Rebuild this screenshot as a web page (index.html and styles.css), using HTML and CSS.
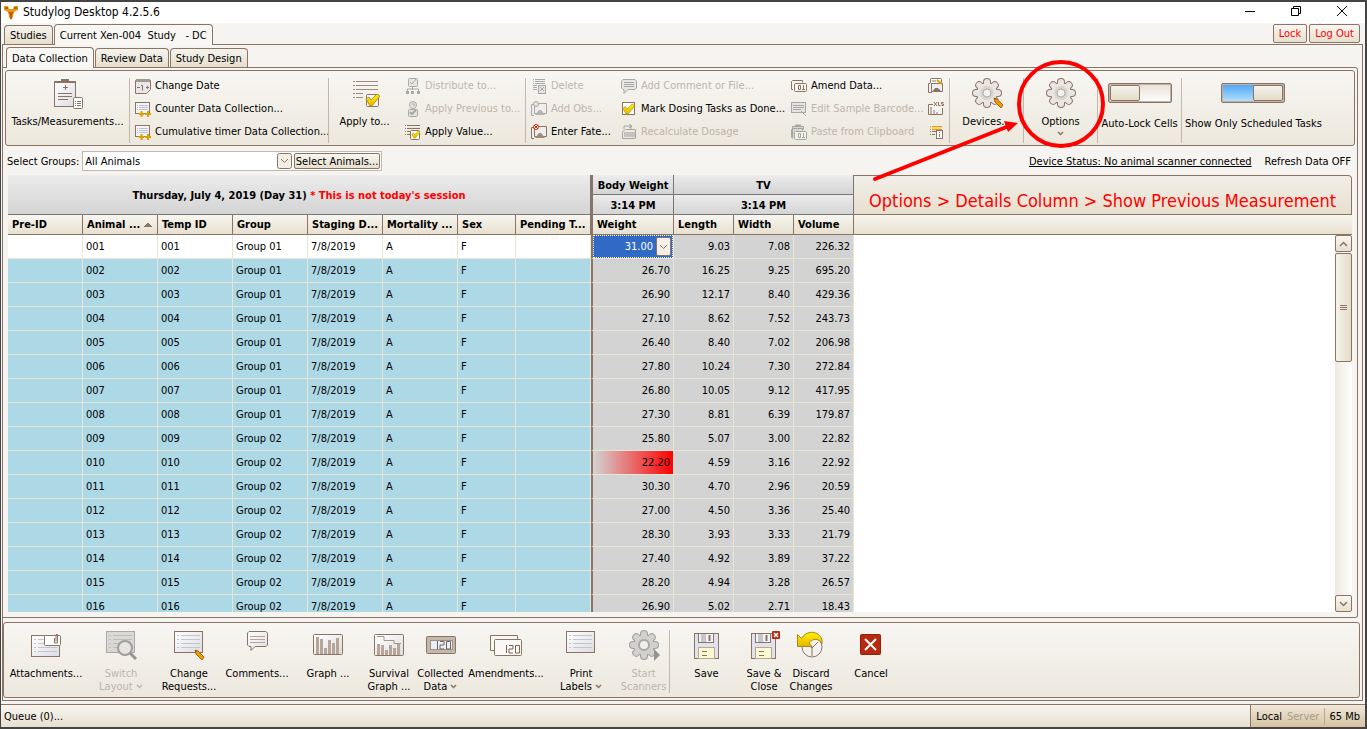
FILE: index.html
```html
<!DOCTYPE html>
<html lang="en">
<head>
    <meta charset="UTF-8">
    <meta name="viewport" content="width=device-width, initial-scale=1.0">
    <title>Studylog Desktop 4.2.5.6</title>
    <link rel="stylesheet" href="styles.css">
</head>
<body>
    <!-- Shared icon shapes -->
    <svg class="sprite" aria-hidden="true">
        <defs>
            <linearGradient id="paper" x1="0" y1="0" x2="1" y2="1">
                <stop offset="0" stop-color="#ffffff"/>
                <stop offset="1" stop-color="#dcdde2"/>
            </linearGradient>
            <linearGradient id="gold" x1="0" y1="0" x2="0" y2="1">
                <stop offset="0" stop-color="#fff200"/>
                <stop offset="1" stop-color="#e8b400"/>
            </linearGradient>
            <g id="gear-shape">
                <rect x="13" y="1" width="6" height="28" rx="3"/>
                <rect x="13" y="1" width="6" height="28" rx="3" transform="rotate(45 16 15)"/>
                <rect x="13" y="1" width="6" height="28" rx="3" transform="rotate(90 16 15)"/>
                <rect x="13" y="1" width="6" height="28" rx="3" transform="rotate(135 16 15)"/>
                <circle cx="16" cy="15" r="10"/>
            </g>
            <g id="gear">
                <use href="#gear-shape" fill="#8c7464" stroke="#8c7464" stroke-width="2"/>
                <use href="#gear-shape" fill="#e9e6e2"/>
                <circle cx="16" cy="15" r="7" fill="#d8d4d0"/>
                <circle cx="16" cy="15" r="4" fill="#f4f2ee" stroke="#b5a89e"/>
            </g>
            <g id="pencil">
                <path d="M0 0l3 1 6 6-2 3-6-6z" fill="#f09a00" stroke="#a86a10"/>
                <path d="M0 0l2 1-1 1z" fill="#5c4030"/>
            </g>
            <g id="check">
                <path d="M1 5l3-2 2 3 6-6 3 2-8 10h-2z" fill="url(#gold)" stroke="#a98a10" stroke-width="0.8"/>
            </g>
            <g id="sheet">
                <rect x="1.5" y="1.5" width="28" height="21" fill="url(#paper)" stroke="#8c7464"/>
                <path d="M4 5.500h2M4 9.500h2M4 13.500h2M4 17.500h2M8 5.500h19M8 9.500h19M8 13.500h19M8 17.500h19" stroke="#c4c4cc"/>
            </g>
            <g id="floppy">
                <rect x="3.500" y="3.500" width="24" height="25" fill="#e0e2f0" stroke="#8c7464"/>
                <rect x="7.500" y="3.500" width="15" height="9" fill="#f4f4f4" stroke="#8c7464"/>
                <rect x="10" y="4" width="5" height="8" fill="#c4c6cc"/>
                <path d="M18.500 5v6" stroke="#8c7464" stroke-width="2"/>
                <rect x="7.500" y="17.500" width="16" height="11" fill="#fbf8d4" stroke="#b8a890"/>
                <path d="M11 21.500h5M11 25.500h5" stroke="#8c7464"/>
            </g>
            <g id="counter">
                <rect x="0.500" y="1.500" width="14" height="11" fill="#f4f5fa" stroke="#8c7464"/>
                <path d="M2 4.500h1M4 4.500h9M2 6.500h1M4 6.500h9M2 8.500h1M4 8.500h9" stroke="#bcc0cc"/>
                <path d="M4 13h5M6.500 10v6M10 13h6M13 10v6" stroke="#dfa000" stroke-width="2"/>
            </g>
            <g id="picture">
                <path d="M3 3.500h-2.500v11H3M5 2.500h10.500v10h-12v-9" fill="#eeeeee" stroke="#8c7464"/>
                <path d="M4 14l4-5 2 0 4 5z" fill="#a08a7c"/>
            </g>
            <g id="tag">
                <path d="M2 11.500h-1.500v-8l1-1h10v2" fill="none" stroke="#8c7464"/>
                <rect x="3.500" y="5.500" width="12" height="8" rx="1" fill="#f7f6f4" stroke="#8c7464"/>
                <path d="M7.500 7.500h2v4h-2zM12.500 7v5M11 11.500h3" fill="none" stroke="#8c7464"/>
            </g>
            <g id="digits">
                <path d="M0.500 0v8M3 0.500h4v3.500h-4v4h4M9.500 0.500h4v7.500h-4z" fill="none" stroke="#7c6454"/>
            </g>
        </defs>
    </svg>

    <div class="window">
        <header class="titlebar">
            <svg width="16" height="16" viewBox="0 0 16 16" aria-hidden="true">
                <path d="M1 1h4l1 3h4l1-3h4v4l-4 2-1 5-2 3-2-3-1-5-4-2z" fill="#e89a10"/>
                <path d="M2 3h3M11 3h3M6 7l2 2 2-2M8 9v5" fill="none" stroke="#b04808" stroke-width="1.500"/>
            </svg>
            <h1 class="title">Studylog Desktop 4.2.5.6</h1>
            <div class="window-buttons">
                <button aria-label="Minimize"><svg width="12" height="12"><path d="M1 6.500h10" stroke="#000"/></svg></button>
                <button aria-label="Restore"><svg width="12" height="12"><path d="M1.500 3.500h7v7h-7zM3.500 3v-1.500h7v7h-2" fill="none" stroke="#000"/></svg></button>
                <button aria-label="Close"><svg width="12" height="12"><path d="M1 1l10 10M11 1l-10 10" stroke="#000"/></svg></button>
            </div>
        </header>

        <nav class="tabs tabs-main">
            <button class="tab">Studies</button>
            <button class="tab active">Current Xen-004  Study   - DC</button>
            <div class="session">
                <button class="btn">Lock</button>
                <button class="btn">Log Out</button>
            </div>
        </nav>

        <main class="workspace">
            <nav class="tabs tabs-study">
                <button class="tab active">Data Collection</button>
                <button class="tab">Review Data</button>
                <button class="tab">Study Design</button>
            </nav>

            <section class="page">
                <div class="ribbon ribbon-top">
                    <div class="group">
                        <button class="big">
                            <svg width="32" height="32" viewBox="0 0 32 32"><rect x="3.500" y="3.500" width="21" height="25" fill="url(#paper)" stroke="#8c7464"/><path d="M3 3h22v2H3zM10 1h8v3h-8z" fill="#8c7464"/><path d="M14.500 7v5M12 9.500h5M7 15.500h14M7 18.500h14M7 21.500h10" stroke="#8c7464"/><rect x="22.500" y="19.500" width="9" height="11" rx="1" fill="#fff" stroke="#8c7464"/><path d="M24 23.500h1M26 23.500h4M24 25.500h1M26 25.500h4M24 27.500h1M26 27.500h4" stroke="#8c7464"/></svg>
                            <span>Tasks/Measurements...</span>
                        </button>
                    </div>
                    <div class="group list divided">
                        <button class="small"><svg width="16" height="16"><path d="M0.500 2.500h15v9l-4 4h-11z" fill="#e8e8ea" stroke="#8c7464"/><path d="M1 1h14v3H1z" fill="#a89888"/><path d="M2 9.500h3M6 7.500h1.500v5M11 9.500h3M12.500 8v3" fill="none" stroke="#8c7464"/></svg>Change Date</button>
                        <button class="small"><svg width="16" height="16"><use href="#counter"/></svg>Counter Data Collection...</button>
                        <button class="small"><svg width="16" height="16"><use href="#counter"/></svg>Cumulative timer Data Collection...</button>
                    </div>
                    <div class="group divided">
                        <button class="big">
                            <svg width="32" height="32" viewBox="0 0 32 32"><path d="M4 3.500h2M7 3.500h22M4 7.500h2M7 7.500h22M4 11.500h2M7 11.500h22M4 15.500h2M7 15.500h7M4 19.500h2M7 19.500h7" stroke="#a08c7e"/><rect x="17.500" y="16.500" width="12" height="12" rx="1" fill="#f4f4f8" stroke="#8c7464"/><use href="#check" x="16" y="16"/></svg>
                            <span>Apply to...</span>
                        </button>
                    </div>
                    <div class="group list">
                        <button class="small" disabled><svg width="16" height="16"><rect x="3.500" y="0.500" width="9" height="8" rx="1" fill="#ddd" stroke="#8c7464"/><path d="M5 4l2 2 4-5M7.500 9v3M2.500 13v-2h11v2" fill="none" stroke="#8c7464"/><path d="M1 13h3v3H1zM6 13h3v3H6zM12 13h3v3h-3z" fill="#8c7464"/></svg>Distribute to...</button>
                        <button class="small" disabled><svg width="16" height="16"><circle cx="8" cy="4" r="3.500" fill="#ddd" stroke="#8c7464"/><path d="M8 2v2h2" fill="none" stroke="#8c7464"/><rect x="3.500" y="8.500" width="9" height="7" rx="1" fill="#ddd" stroke="#8c7464"/><path d="M5 11l2 2 4-4" fill="none" stroke="#8c7464" stroke-width="2"/></svg>Apply Previous to...</button>
                        <button class="small"><svg width="16" height="16"><path d="M0 1.500h1M2 1.500h13M0 4.500h1M2 4.500h13M0 7.500h1M2 7.500h4M0 10.500h1M2 10.500h3" stroke="#8c7464"/><rect x="5.500" y="6.500" width="9" height="9" rx="1" fill="#fff" stroke="#8c7464"/><use href="#check" transform="translate(6 7) scale(0.600)"/></svg>Apply Value...</button>
                    </div>
                    <div class="group list divided">
                        <button class="small" disabled><svg width="16" height="16"><path d="M2 1.500h1M4 1.500h10M2 3.500h1M4 3.500h10M2 5.500h1M4 5.500h10M2 7.500h4M2 9.500h4M2 11.500h4" stroke="#8c7464"/><rect x="7.500" y="7.500" width="7" height="8" fill="#ddd" stroke="#8c7464"/><path d="M9 9l4 4M13 9l-4 4" stroke="#8c7464"/></svg>Delete</button>
                        <button class="small" disabled><svg width="16" height="16"><use href="#picture"/><circle cx="5" cy="3" r="2.500" fill="#ddd" stroke="#8c7464"/></svg>Add Obs...</button>
                        <button class="small"><svg width="16" height="16"><use href="#picture"/><circle cx="5" cy="3" r="2.500" fill="#fff" stroke="#c03010"/><path d="M3 1l4 4M7 1L3 5" stroke="#c03010"/></svg>Enter Fate...</button>
                    </div>
                    <div class="group list">
                        <button class="small" disabled><svg width="16" height="16"><path d="M2 1.500h12l1.500 1.500v7l-1.500 1.500H7l-4 4v-4H2L0.500 10V3z" fill="#ddd" stroke="#8c7464"/><path d="M3 4.500h10M3 6.500h10M3 8.500h10" stroke="#8c7464"/></svg>Add Comment or File...</button>
                        <button class="small"><svg width="16" height="16"><rect x="1.500" y="1.500" width="12" height="12" fill="#fff" stroke="#8c7464"/><use href="#check" transform="translate(1 3) scale(0.850)"/></svg>Mark Dosing Tasks as Done...</button>
                        <button class="small" disabled><svg width="16" height="16"><path d="M1.500 14.500v-7l3-2h10v9zM3 5V2h7v3M8 0l3 2-3 2" fill="none" stroke="#8c7464"/><path d="M3 8h11v5H3z" fill="#aaa"/></svg>Recalculate Dosage</button>
                    </div>
                    <div class="group list">
                        <button class="small"><svg width="16" height="16"><use href="#tag"/></svg>Amend Data...</button>
                        <button class="small" disabled><svg width="16" height="16"><rect x="0.500" y="1.500" width="14" height="10" fill="#ddd" stroke="#8c7464"/><path d="M2 4.500h11M2 6.500h11M2 8.500h8M10 10l5 5" stroke="#8c7464"/></svg>Edit Sample Barcode...</button>
                        <button class="small" disabled><svg width="16" height="16"><path d="M1.500 14.500v-12h11v3" fill="#ccc" stroke="#8c7464"/><path d="M4 1.500h6" stroke="#8c7464" stroke-width="2"/><use href="#tag" y="2"/></svg>Paste from Clipboard</button>
                    </div>
                    <div class="group list">
                        <button class="small" aria-label="Edit picture data"><svg width="16" height="16"><rect x="2.500" y="0.500" width="11" height="5" rx="1" fill="#fff" stroke="#8c7464"/><path d="M5 2v2M7 2v2M9 3h2" stroke="#8c7464"/><path d="M2 5.500H.500v9H4M3.500 5.500h11v8h-11z" fill="#eee" stroke="#8c7464"/><path d="M4 14l3-4h3l4 4z" fill="#8c7464"/><path d="M9 2l5 4" stroke="#e89a00" stroke-width="2"/></svg></button>
                        <button class="small" aria-label="Export to XLS"><svg width="16" height="16"><path d="M5 3.500H.500v10h14V7" fill="#f4f3f0" stroke="#8c7464"/><path d="M2 6h2v7H2zM5 9h2v4H5zM8 11h2v2H8z" fill="#c4b4a8"/><path d="M6 1l3 4M9 1L6 5M10.500 1v3.500h2M15.500 1.500h-2V3h2v1.500h-2" fill="none" stroke="#8c7464"/></svg></button>
                        <button class="small" aria-label="Show details"><svg width="16" height="16"><path d="M2 2.500h1M4 2.500h10M2 5.500h1M4 5.500h10" stroke="#e89a00"/><path d="M2 4h1M4 4h10" stroke="#f4c060"/><path d="M2 7.500h1M4 7.500h4M2 10.500h1M4 10.500h3" stroke="#8c7464"/><rect x="8.500" y="6.500" width="6" height="8" fill="#fff" stroke="#8c7464"/><path d="M11.500 8v1M11.500 10v3" stroke="#8c7464"/></svg></button>
                    </div>
                    <div class="group divided">
                        <button class="big">
                            <svg width="32" height="32" viewBox="0 0 32 32"><use href="#gear"/><use href="#pencil" x="23" y="20"/></svg>
                            <span>Devices...</span>
                        </button>
                    </div>
                    <div class="group divided">
                        <button class="big">
                            <svg width="32" height="32" viewBox="0 0 32 32"><use href="#gear"/></svg>
                            <span>Options</span>
                            <svg class="caret" width="7" height="6"><path d="M1 1l2.500 2.500L6 1" fill="none" stroke="#8c7464" stroke-width="1.500"/></svg>
                        </button>
                    </div>
                    <div class="group divided">
                        <label class="switch"><input type="checkbox"><span>Auto-Lock Cells</span></label>
                    </div>
                    <div class="group divided">
                        <label class="switch"><input type="checkbox" checked><span>Show Only Scheduled Tasks</span></label>
                    </div>
                </div>

                <div class="filters">
                    <label for="groups">Select Groups:</label>
                    <div class="group-picker">
                        <select id="groups"><option>All Animals</option></select>
                        <button class="btn">Select Animals...</button>
                    </div>
                    <a class="device-status" href="#">Device Status: No animal scanner connected</a>
                    <span>Refresh Data OFF</span>
                </div>

                <div class="grid">
                    <table>
                        <colgroup>
                            <col class="c-wide"><col class="c-wide"><col class="c-wide"><col class="c-wide"><col class="c-wide"><col class="c-wide"><col class="c-sex"><col class="c-wide">
                            <col class="c-weight"><col class="c-num"><col class="c-num"><col class="c-num"><col>
                        </colgroup>
                        <thead>
                            <tr class="bands">
                                <th class="band session-band" colspan="8" rowspan="2">Thursday, July 4, 2019 (Day 31) <span class="warn">* This is not today's session</span></th>
                                <th class="band split">Body Weight</th>
                                <th class="band" colspan="3">TV</th>
                                <th class="hint" rowspan="2">Options &gt; Details Column &gt; Show Previous Measurement</th>
                            </tr>
                            <tr class="bands">
                                <th class="band split">3:14 PM</th>
                                <th class="band" colspan="3">3:14 PM</th>
                            </tr>
                            <tr class="columns">
                                <th>Pre-ID</th>
                                <th class="sorted">Animal ...</th>
                                <th>Temp ID</th>
                                <th>Group</th>
                                <th>Staging D...</th>
                                <th>Mortality ...</th>
                                <th>Sex</th>
                                <th>Pending T...</th>
                                <th class="split">Weight</th>
                                <th>Length</th>
                                <th>Width</th>
                                <th>Volume</th>
                                <th class="rest"></th>
                            </tr>
                        </thead>
                        <tbody>
                            <tr class="current"><td></td><td>001</td><td>001</td><td>Group 01</td><td>7/8/2019</td><td>A</td><td>F</td><td></td><td class="num split editing"><div class="editor"><input type="text" value="31.00" aria-label="Weight"><button class="drop" aria-label="Open"><svg width="9" height="6"><path d="M1 1l3.500 3.500L8 1" fill="none" stroke="#8c7464"/></svg></button></div></td><td class="num">9.03</td><td class="num">7.08</td><td class="num">226.32</td><td class="rest"></td></tr>
                            <tr><td></td><td>002</td><td>002</td><td>Group 01</td><td>7/8/2019</td><td>A</td><td>F</td><td></td><td class="num split">26.70</td><td class="num">16.25</td><td class="num">9.25</td><td class="num">695.20</td><td class="rest"></td></tr>
                            <tr><td></td><td>003</td><td>003</td><td>Group 01</td><td>7/8/2019</td><td>A</td><td>F</td><td></td><td class="num split">26.90</td><td class="num">12.17</td><td class="num">8.40</td><td class="num">429.36</td><td class="rest"></td></tr>
                            <tr><td></td><td>004</td><td>004</td><td>Group 01</td><td>7/8/2019</td><td>A</td><td>F</td><td></td><td class="num split">27.10</td><td class="num">8.62</td><td class="num">7.52</td><td class="num">243.73</td><td class="rest"></td></tr>
                            <tr><td></td><td>005</td><td>005</td><td>Group 01</td><td>7/8/2019</td><td>A</td><td>F</td><td></td><td class="num split">26.40</td><td class="num">8.40</td><td class="num">7.02</td><td class="num">206.98</td><td class="rest"></td></tr>
                            <tr><td></td><td>006</td><td>006</td><td>Group 01</td><td>7/8/2019</td><td>A</td><td>F</td><td></td><td class="num split">27.80</td><td class="num">10.24</td><td class="num">7.30</td><td class="num">272.84</td><td class="rest"></td></tr>
                            <tr><td></td><td>007</td><td>007</td><td>Group 01</td><td>7/8/2019</td><td>A</td><td>F</td><td></td><td class="num split">26.80</td><td class="num">10.05</td><td class="num">9.12</td><td class="num">417.95</td><td class="rest"></td></tr>
                            <tr><td></td><td>008</td><td>008</td><td>Group 01</td><td>7/8/2019</td><td>A</td><td>F</td><td></td><td class="num split">27.30</td><td class="num">8.81</td><td class="num">6.39</td><td class="num">179.87</td><td class="rest"></td></tr>
                            <tr><td></td><td>009</td><td>009</td><td>Group 02</td><td>7/8/2019</td><td>A</td><td>F</td><td></td><td class="num split">25.80</td><td class="num">5.07</td><td class="num">3.00</td><td class="num">22.82</td><td class="rest"></td></tr>
                            <tr><td></td><td>010</td><td>010</td><td>Group 02</td><td>7/8/2019</td><td>A</td><td>F</td><td></td><td class="num split alert">22.20</td><td class="num">4.59</td><td class="num">3.16</td><td class="num">22.92</td><td class="rest"></td></tr>
                            <tr><td></td><td>011</td><td>011</td><td>Group 02</td><td>7/8/2019</td><td>A</td><td>F</td><td></td><td class="num split">30.30</td><td class="num">4.70</td><td class="num">2.96</td><td class="num">20.59</td><td class="rest"></td></tr>
                            <tr><td></td><td>012</td><td>012</td><td>Group 02</td><td>7/8/2019</td><td>A</td><td>F</td><td></td><td class="num split">27.00</td><td class="num">4.50</td><td class="num">3.36</td><td class="num">25.40</td><td class="rest"></td></tr>
                            <tr><td></td><td>013</td><td>013</td><td>Group 02</td><td>7/8/2019</td><td>A</td><td>F</td><td></td><td class="num split">28.30</td><td class="num">3.93</td><td class="num">3.33</td><td class="num">21.79</td><td class="rest"></td></tr>
                            <tr><td></td><td>014</td><td>014</td><td>Group 02</td><td>7/8/2019</td><td>A</td><td>F</td><td></td><td class="num split">27.40</td><td class="num">4.92</td><td class="num">3.89</td><td class="num">37.22</td><td class="rest"></td></tr>
                            <tr><td></td><td>015</td><td>015</td><td>Group 02</td><td>7/8/2019</td><td>A</td><td>F</td><td></td><td class="num split">28.20</td><td class="num">4.94</td><td class="num">3.28</td><td class="num">26.57</td><td class="rest"></td></tr>
                            <tr><td></td><td>016</td><td>016</td><td>Group 02</td><td>7/8/2019</td><td>A</td><td>F</td><td></td><td class="num split">26.90</td><td class="num">5.02</td><td class="num">2.71</td><td class="num">18.43</td><td class="rest"></td></tr>
                        </tbody>
                    </table>
                    <div class="scrollbar">
                        <button class="btn" aria-label="Scroll up"><svg width="9" height="6"><path d="M1 5l3.500-3.500L8 5" fill="none" stroke="#8c7464" stroke-width="1.500"/></svg></button>
                        <div class="thumb"><svg width="7" height="6"><path d="M0 .500h7M0 2.500h7M0 4.500h7" stroke="#8c7464"/></svg></div>
                        <button class="btn" aria-label="Scroll down"><svg width="9" height="6"><path d="M1 1l3.500 3.500L8 1" fill="none" stroke="#8c7464" stroke-width="1.500"/></svg></button>
                    </div>
                </div>
            </section>

            <section class="ribbon ribbon-bottom">
                <button class="big"><svg width="32" height="32" viewBox="0 0 32 32"><use href="#sheet" y="4"/><rect x="14.500" y="5.500" width="16" height="10" rx="1" fill="#fff" stroke="#8c7464"/><path d="M24.500 8v5h3V4.500h-1.500v7" fill="none" stroke="#8c7464"/></svg><span>Attachments...</span></button>
                <button class="big" disabled><svg width="32" height="32" viewBox="0 0 32 32"><rect x="1.500" y="1.500" width="28" height="21" fill="#c8c8c8" stroke="#777"/><path d="M4 5.500h2M4 9.500h2M4 13.500h2M4 17.500h2M8 5.500h19M8 9.500h19M8 13.500h19M8 17.500h19" stroke="#999"/><path d="M25 23l6 6" stroke="#555" stroke-width="3"/><circle cx="20" cy="18" r="7" fill="#ddd" stroke="#666" stroke-width="2"/></svg><span>Switch<br>Layout <svg width="7" height="6"><path d="M1 1l2.500 2.500L6 1" fill="none" stroke="#bdb5ad" stroke-width="1.500"/></svg></span></button>
                <button class="big"><svg width="32" height="32" viewBox="0 0 32 32"><use href="#sheet"/><use href="#pencil" x="22" y="20"/></svg><span>Change<br>Requests...</span></button>
                <button class="big"><svg width="32" height="32" viewBox="0 0 32 32"><path d="M8 1.500h17l1.500 1.500v12l-1.500 1.500H14l-4 4v-4H8L6.500 15V3z" fill="url(#paper)" stroke="#8c7464"/><path d="M9 6.500h15M9 9.500h15M9 12.500h15" stroke="#b8a498"/></svg><span>Comments...</span></button>
                <button class="big"><svg width="32" height="32" viewBox="0 0 32 32"><rect x="1.500" y="4.500" width="29" height="20" rx="1" fill="url(#paper)" stroke="#8c7464"/><path d="M4 7h3v17H4zM8 9h3v15H8zM12 18h3v6h-3zM16 10h3v14h-3zM20 13h3v11h-3zM24 8h3v16h-3z" fill="#b8a498"/></svg><span>Graph ...</span></button>
                <button class="big"><svg width="32" height="32" viewBox="0 0 32 32"><rect x="1.500" y="4.500" width="29" height="21" rx="1" fill="url(#paper)" stroke="#8c7464"/><path d="M4 14h3v11H4zM8 15h3v10H8zM12 20h3v5h-3zM16 15h3v10h-3zM20 18h3v7h-3zM24 14h3v11h-3z" fill="#b8a498"/><path d="M4 6.500h7v4h10v3h7" fill="none" stroke="#a89488"/></svg><span>Survival<br>Graph ...</span></button>
                <button class="big"><svg width="32" height="32" viewBox="0 0 32 32"><rect x="1.500" y="6.500" width="29" height="17" rx="1" fill="#c4b8ae" stroke="#8c7464"/><rect x="5.500" y="10.500" width="22" height="9" fill="#e4f0fa" stroke="#a09088"/><use href="#digits" x="12" y="11"/></svg><span>Collected<br>Data <svg width="7" height="6"><path d="M1 1l2.500 2.500L6 1" fill="none" stroke="#8c7464" stroke-width="1.500"/></svg></span></button>
                <button class="big"><svg width="32" height="32" viewBox="0 0 32 32"><path d="M4 20.500H.500v-15h27v4" fill="#f7f6f4" stroke="#8c7464"/><rect x="4.500" y="9.500" width="27" height="16" rx="1" fill="#f9f8f6" stroke="#8c7464"/><use href="#digits" x="16" y="15"/></svg><span>Amendments...</span></button>
                <button class="big"><svg width="32" height="32" viewBox="0 0 32 32"><use href="#sheet"/></svg><span>Print<br>Labels <svg width="7" height="6"><path d="M1 1l2.500 2.500L6 1" fill="none" stroke="#8c7464" stroke-width="1.500"/></svg></span></button>
                <button class="big" disabled><svg width="32" height="32" viewBox="0 0 32 32"><use href="#gear-shape" fill="#666" stroke="#666" stroke-width="2"/><use href="#gear-shape" fill="#bbb"/><circle cx="16" cy="15" r="5" fill="#eee" stroke="#777" stroke-width="2"/><path d="M26 19l6 6-6 6z" fill="#555"/></svg><span>Start<br>Scanners</span></button>
                <button class="big divided"><svg width="32" height="32" viewBox="0 0 32 32"><use href="#floppy"/></svg><span>Save</span></button>
                <button class="big"><svg width="32" height="32" viewBox="0 0 32 32"><use href="#floppy"/><rect x="24" y="1" width="8" height="8" rx="1" fill="#b82a10"/><path d="M26 3l4 4M30 3l-4 4" stroke="#fff" stroke-width="1.500"/></svg><span>Save &amp;<br>Close</span></button>
                <button class="big"><svg width="32" height="32" viewBox="0 0 32 32"><circle cx="17" cy="17" r="10" fill="#f4f2ee" stroke="#8c7464"/><path d="M17 26v-8l6-6M17 18l-6-5" fill="none" stroke="#8c7464"/><path d="M2.500 4.500l4 4C11 0 24 0 27 10v4c-3-6-9-6-13-1l3 3.500H2.500z" fill="url(#gold)" stroke="#a08a20"/></svg><span>Discard<br>Changes</span></button>
                <button class="big"><svg width="32" height="32" viewBox="0 0 32 32"><rect x="5.500" y="4.500" width="20" height="20" rx="1" fill="#b82a10" stroke="#8c2008"/><path d="M10 9l11 11M21 9L10 20" stroke="#fff" stroke-width="2"/></svg><span>Cancel</span></button>
            </section>
        </main>

        <footer class="statusbar">
            <span class="queue">Queue (0)...</span>
            <div class="server">
                <span>Local</span>
                <span class="off">Server</span>
                <span class="memory">65 Mb</span>
            </div>
        </footer>

        <!-- Callout drawn over the Options button -->
        <svg class="callout" width="240" height="130" viewBox="0 0 240 130" aria-hidden="true">
            <circle cx="192" cy="49" r="42" fill="none" stroke="#f00" stroke-width="4"/>
            <path d="M6 124L140 71" stroke="#f00" stroke-width="4" stroke-linecap="round"/>
            <path d="M149 68l-14-2 4 11z" fill="#f00"/>
        </svg>
    </div>
</body>
</html>
```
FILE: styles.css
```css
* {
    margin: 0;
    padding: 0;
    box-sizing: border-box;
}

body {
    font-family: Tahoma, "DejaVu Sans Condensed", "Noto Sans", sans-serif;
    font-size: 11px;
    line-height: 13px;
    color: #000;
    background: #f6f4f0;
}

button,
input,
select {
    font: inherit;
    color: inherit;
    border: none;
    background: none;
}

button {
    white-space: nowrap;
}

svg {
    flex: none;
}

.sprite {
    position: absolute;
    width: 0;
    height: 0;
}

.window {
    position: relative;
    display: flex;
    flex-direction: column;
    height: 100vh;
    min-width: 1340px;
    border: 1px solid #444;
    border-top-width: 2px;
    border-right-width: 2px;
    border-bottom-width: 2px;
    overflow: hidden;
}

/* Title bar */
.titlebar {
    display: flex;
    align-items: center;
    flex: none;
    height: 21px;
    padding-left: 2px;
    gap: 4px;
    background: #fff;
}

.title {
    font-size: 12px;
    font-weight: normal;
}

.window-buttons {
    display: flex;
    margin-left: auto;
}

.window-buttons button {
    width: 46px;
    height: 18px;
}

/* Tabs */
.tabs {
    display: flex;
    align-items: flex-end;
    flex: none;
    gap: 1px;
    padding-left: 3px;
}

.tabs-main {
    height: 21px;
}

.tabs-study {
    height: 22px;
}

.tab {
    height: 19px;
    padding: 0 5px;
    border: 1px solid #8c7464;
    border-bottom: none;
    border-radius: 4px 4px 0 0;
    background: linear-gradient(#f5f3ee, #e6dfcd);
    white-space: pre;
}

.tab.active {
    position: relative;
    height: 21px;
    margin-bottom: -1px;
    background: #f8f7f4;
}

.session {
    display: flex;
    gap: 2px;
    margin: 0 5px 1px auto;
    color: #f00;
}

.btn {
    padding: 0 5px;
    border: 1px solid #8c7464;
    border-radius: 2px;
    background: linear-gradient(#f8f6f2, #e7e0cf);
}

.session .btn {
    height: 19px;
}

/* Main frame */
.workspace {
    display: flex;
    flex-direction: column;
    flex: 1;
    min-height: 0;
    margin: 0 2px 3px 1px;
    border: 1px solid #8c7464;
    background: #f6f4f0;
}

.page {
    display: flex;
    flex-direction: column;
    flex: 1;
    min-height: 0;
    margin-right: 4px;
    border: 1px solid #8c7464;
    border-left: none;
    border-radius: 0 3px 3px 0;
    padding: 2px 2px 5px;
}

.ribbon {
    display: grid;
    flex: none;
    height: 76px;
    border: 1px solid #8c7464;
    border-radius: 3px;
    background: linear-gradient(#f8f6f3, #ece8dd);
}

.ribbon-top {
    grid-template-columns: 123px 199px 72px 125px 91px 170px 137px 26px 74px 74px 84px 1fr;
    padding: 7px 0 6px;
}

.ribbon-bottom {
    grid-template-columns: 82px 68px 68px 68px 74px 48px 55px 76px 74px 51px 74px 42px 52px 68px;
    margin: 4px 2px 2px 0;
    padding: 7px 0 6px 1px;
}

.group {
    display: flex;
    justify-content: center;
}

.divided {
    border-left: 1px solid #c4b6a8;
}

.group.list {
    flex-direction: column;
    justify-content: flex-start;
    padding-left: 5px;
    margin-top: -4px;
}

.group.list.divided {
    margin-top: 0;
}

.group.list.divided .small:first-child {
    margin-top: -4px;
}

.big {
    display: flex;
    flex-direction: column;
    align-items: center;
    text-align: center;
}

.big > span {
    margin-top: 5px;
}

.caret {
    margin-top: 3px;
}

.small {
    display: flex;
    align-items: center;
    gap: 4px;
    height: 23px;
}

.big:disabled,
.small:disabled {
    color: #bdb5ad;
}

.big:disabled > svg,
.small:disabled > svg {
    opacity: 0.6;
    filter: grayscale(1);
}

/* On/off switches */
.switch {
    display: flex;
    flex-direction: column;
    align-items: center;
    gap: 14px;
    padding-top: 5px;
    white-space: nowrap;
}

.group:last-child {
    justify-content: flex-start;
    padding-left: 3px;
}

.switch input {
    appearance: none;
    display: flex;
    width: 64px;
    height: 20px;
    padding: 1px;
    border: 1px solid #8c7464;
    border-radius: 2px;
    box-shadow: inset 0 0 0 1px #c0b2a6;
    background: linear-gradient(#e8e0d4, #fff);
}

.switch input::before {
    content: "";
    width: 28px;
    border: 1px solid #8c7464;
    border-radius: 2px;
    background: linear-gradient(#f5f3ee, #e4dcc8);
}

.switch input:checked {
    justify-content: flex-end;
    background: linear-gradient(#4aa6f8, #b8e2fc);
}

/* Filter row */
.filters {
    display: flex;
    align-items: center;
    flex: none;
    height: 29px;
    padding: 1px 4px 0 2px;
}

.group-picker {
    display: flex;
    width: 300px;
    height: 20px;
    margin-left: 3px;
    border: 1px solid #c4b8ac;
    background: #fff;
}

.group-picker select {
    appearance: none;
    flex: 1;
    padding-left: 2px;
    background:
        url("data:image/svg+xml,%3Csvg xmlns='http://www.w3.org/2000/svg' width='15' height='16'%3E%3Crect x='.5' y='.5' width='14' height='15' rx='2' fill='%23f3efe6' stroke='%238c7464'/%3E%3Cpath d='M4 6l3.500 3.500L11 6' fill='none' stroke='%238c7464'/%3E%3C/svg%3E")
        no-repeat right center;
}

.group-picker .btn {
    margin: 1px 1px 1px 2px;
    padding: 0 1px;
}

.device-status {
    margin: 0 13px 0 auto;
    color: #000;
}

/* Data grid */
.grid {
    position: relative;
    flex: 1;
    min-height: 0;
    margin: 0 3px;
    background: #fff;
    overflow: hidden;
}

.grid table {
    width: 100%;
    table-layout: fixed;
    border-collapse: separate;
    border-spacing: 0;
}

.c-wide { width: 75px; }
.c-sex { width: 58px; }
.c-weight { width: 83px; }
.c-num { width: 60px; }

.grid th,
.grid td {
    overflow: hidden;
    white-space: nowrap;
}

.bands th {
    height: 20px;
}

.band {
    padding-top: 2px;
    border-right: 1px solid #777;
    border-bottom: 1px solid #777;
    background: linear-gradient(#ececec, #d4d4d4);
}

.warn {
    color: #f00;
}

.hint {
    padding-top: 12px;
    border-top: 1px solid #8c7464;
    border-right: 1px solid #8c7464;
    border-bottom: 1px solid #8c7464;
    border-radius: 0 4px 0 0;
    background: linear-gradient(#f2efe8, #e7e0cf);
    color: #f00;
    font-size: 18px;
    line-height: 22px;
    font-weight: normal;
}

.columns th {
    height: 20px;
    padding: 0 4px;
    border-right: 1px solid #8c7464;
    border-bottom: 1px solid #8c7464;
    background: linear-gradient(#f8f6f1, #e7e0cf);
    text-align: left;
}

.columns .rest {
    border-right: none;
}

.columns .sorted {
    background:
        linear-gradient(to bottom right, transparent 50%, #8c7464 50%) 61px 8px / 4px 4px no-repeat,
        linear-gradient(to bottom left, transparent 50%, #8c7464 50%) 65px 8px / 4px 4px no-repeat,
        linear-gradient(#f8f6f1, #e7e0cf);
}

.grid td {
    height: 24px;
    padding: 0 3px 1px;
    border-right: 1px solid #e8e4d6;
    border-bottom: 1px solid #e8e4d6;
    background: #add8e6;
}

.grid .current td {
    background: #fff;
}

.grid td.num,
.grid .current td.num {
    background: #d3d3d3;
    text-align: right;
}

.grid td.rest {
    border: none;
    background: #fff;
}

.grid .split {
    border-left: 2px solid #8c7464;
}

.grid td.alert {
    background: linear-gradient(to right, #d3d3d3, #f00);
}

.grid .current td.editing {
    padding: 0;
    background: #316ac5;
}

.editor {
    display: flex;
    height: 23px;
    padding: 1px;
    border: 1px dotted #fff;
    color: #fff;
}

.editor input {
    flex: 1;
    min-width: 0;
    padding-right: 3px;
    text-align: right;
}

.drop {
    width: 15px;
    border: 1px solid #8c7464;
    border-radius: 2px;
    background: #f3efe6;
}

.scrollbar {
    position: absolute;
    top: 60px;
    right: 0;
    bottom: 0;
    display: flex;
    flex-direction: column;
    width: 17px;
    background: linear-gradient(to right, #efe9de, #fff);
}

.scrollbar .btn {
    height: 17px;
    padding: 0;
}

.scrollbar .btn:last-child {
    margin-top: auto;
}

.thumb {
    display: flex;
    align-items: center;
    justify-content: center;
    height: 109px;
    margin-top: 1px;
    border: 1px solid #8c7464;
    border-radius: 2px;
    background: linear-gradient(to right, #f5f3ea, #e3dcc8);
}

/* Status bar */
.statusbar {
    display: flex;
    align-items: center;
    flex: none;
    height: 23px;
    border-top: 1px solid #8c7464;
    background: linear-gradient(#f8f6f1, #e7e0cf);
}

.queue {
    flex: 1;
    padding-left: 3px;
}

.server {
    display: flex;
    align-items: center;
    gap: 5px;
    height: 22px;
    padding: 0 5px;
    border-left: 1px solid #8c7464;
    background: linear-gradient(#f0e8da, #d6c3a2);
}

.off {
    color: #a89c8c;
}

.memory {
    padding: 2px 0 2px 4px;
    border-left: 1px solid #b8a890;
}

.callout {
    position: absolute;
    top: 53px;
    left: 868px;
    pointer-events: none;
}
```
